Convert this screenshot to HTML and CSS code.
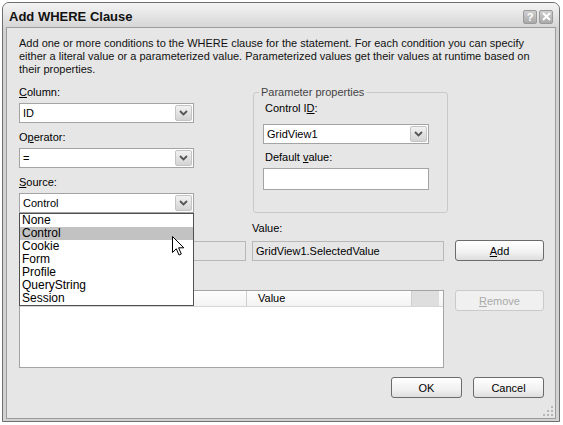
FILE: index.html
```html
<!DOCTYPE html>
<html lang="en">
<head>
  <meta charset="UTF-8">
  <title>Add WHERE Clause</title>
  <link rel="stylesheet" href="styles.css">
</head>
<body>
  <div class="window">
    <div class="titlebar">
      <span class="title">Add WHERE Clause</span>
      <div class="caption-buttons">
        <span class="cap-btn">?</span>
        <span class="cap-btn">
          <svg width="9" height="9" viewBox="0 0 9 9"><path d="M1 1 L8 8 M8 1 L1 8" stroke="#fff" stroke-width="2"/></svg>
        </span>
      </div>
    </div>

    <div class="client">
      <p class="intro">Add one or more conditions to the WHERE clause for the statement. For each condition you can specify either a literal value or a parameterized value. Parameterized values get their values at runtime based on their properties.</p>

      <div class="top-row">
        <div class="fields">
          <div class="field">
            <label><u>C</u>olumn:</label>
            <div class="combo">
              <span class="combo-text">ID</span>
              <span class="combo-btn"><svg width="9" height="6" viewBox="0 0 9 6"><path d="M1 1 L4.5 4.5 L8 1" fill="none" stroke="#555" stroke-width="1.8"/></svg></span>
            </div>
          </div>
          <div class="field">
            <label>O<u>p</u>erator:</label>
            <div class="combo">
              <span class="combo-text">=</span>
              <span class="combo-btn"><svg width="9" height="6" viewBox="0 0 9 6"><path d="M1 1 L4.5 4.5 L8 1" fill="none" stroke="#555" stroke-width="1.8"/></svg></span>
            </div>
          </div>
          <div class="field">
            <label><u>S</u>ource:</label>
            <div class="combo">
              <span class="combo-text">Control</span>
              <span class="combo-btn"><svg width="9" height="6" viewBox="0 0 9 6"><path d="M1 1 L4.5 4.5 L8 1" fill="none" stroke="#555" stroke-width="1.8"/></svg></span>
              <ul class="droplist">
                <li>None</li>
                <li class="hover">Control</li>
                <li>Cookie</li>
                <li>Form</li>
                <li>Profile</li>
                <li>QueryString</li>
                <li>Session</li>
              </ul>
              <svg class="cursor" width="13" height="21" viewBox="0 0 13 21"><path d="M0.5 0.5 L0.5 16.5 L4.3 12.8 L7 19 L9.3 18 L6.6 11.8 L11.8 11.8 Z" fill="#fff" stroke="#000" stroke-width="1"/></svg>
            </div>
          </div>
        </div>

        <fieldset class="params">
          <legend>Parameter properties</legend>
          <label>Control I<u>D</u>:</label>
          <div class="combo">
            <span class="combo-text">GridView1</span>
            <span class="combo-btn"><svg width="9" height="6" viewBox="0 0 9 6"><path d="M1 1 L4.5 4.5 L8 1" fill="none" stroke="#555" stroke-width="1.8"/></svg></span>
          </div>
          <label class="second">Default <u>v</u>alue:</label>
          <div class="textbox tall"></div>
        </fieldset>
      </div>

      <div class="mid-row">
        <div class="field expr">
          <label class="blank"></label>
          <div class="textbox readonly"></div>
        </div>
        <div class="field value">
          <label>Value:</label>
          <div class="textbox readonly">GridView1.SelectedValue</div>
        </div>
        <button class="btn"><u>A</u>dd</button>
      </div>

      <label class="list-label blank"></label>
      <div class="list-row">
        <div class="listview">
          <div class="lv-header">
            <span class="lv-col first"></span>
            <span class="lv-col second">Value</span>
            <span class="lv-fill"></span>
          </div>
        </div>
        <button class="btn" disabled><u>R</u>emove</button>
      </div>

      <div class="footer">
        <button class="btn small">OK</button>
        <button class="btn small">Cancel</button>
      </div>

      <svg class="grip" width="11" height="11" viewBox="0 0 11 11">
        <rect x="8" y="0" width="2" height="2" fill="#b5b5b5"/>
        <rect x="4" y="4" width="2" height="2" fill="#b5b5b5"/>
        <rect x="8" y="4" width="2" height="2" fill="#b5b5b5"/>
        <rect x="0" y="8" width="2" height="2" fill="#b5b5b5"/>
        <rect x="4" y="8" width="2" height="2" fill="#b5b5b5"/>
        <rect x="8" y="8" width="2" height="2" fill="#b5b5b5"/>
      </svg>
    </div>
  </div>
</body>
</html>
```

FILE: styles.css
```css
* {
  box-sizing: border-box;
}

body {
  margin: 0;
  background: #fff;
  font-family: 'Liberation Sans', Arial, sans-serif;
  font-size: 11px;
  color: #000;
}

.window {
  margin: 2px 0 0 2px;
  width: 558px;
  height: 420px;
  border: 1px solid #6e6e6e;
  border-radius: 7px 7px 0 0;
  background: #d2d2d2;
  padding: 0 3px 2px 3px;
  display: flex;
  flex-direction: column;
}

.titlebar {
  height: 24px;
  display: flex;
  align-items: center;
  justify-content: space-between;
  padding: 0 6px 0 6px;
  margin: 0 -3px;
  border-radius: 6px 6px 0 0;
  background: linear-gradient(#f4f4f4, #e2e2e2 60%, #d6d6d6);
}

.title {
  font-weight: bold;
  font-size: 13px;
  color: #111;
  padding-top: 2px;
}

.caption-buttons {
  display: flex;
  gap: 2px;
  padding-top: 3px;
}

.cap-btn {
  width: 14px;
  height: 14px;
  border: 1px solid #9a9a9a;
  border-radius: 2px;
  background: linear-gradient(#cfcfcf, #a9a9a9);
  color: #fff;
  font-weight: bold;
  font-size: 11px;
  line-height: 12px;
  text-align: center;
  display: flex;
  align-items: center;
  justify-content: center;
}

.client {
  flex: 1;
  position: relative;
  background: #e6e6e6;
  border: 1px solid #9c9c9c;
  padding: 9px 11px 0 12px;
}

.intro {
  margin: 0 0 10px 0;
  line-height: 13px;
  padding-right: 13px;
  color: #111;
}

label {
  display: block;
  line-height: 13px;
  height: 13px;
  margin-bottom: 4px;
}

.top-row {
  display: flex;
  gap: 59px;
  height: 127px;
}

.fields {
  width: 175px;
}

.field {
  margin-bottom: 8px;
}

.fields .field:last-child {
  margin-bottom: 0;
}

.combo {
  position: relative;
  height: 20px;
  background: #fff;
  border: 1px solid #a4a4a4;
  display: flex;
  align-items: center;
  justify-content: space-between;
  padding: 1px 1px 1px 3px;
}

.combo-btn {
  width: 17px;
  height: 16px;
  border: 1px solid #c4c4c4;
  border-radius: 2px;
  background: linear-gradient(#f2f2f2, #d3d3d3);
  display: flex;
  align-items: center;
  justify-content: center;
}

.droplist {
  position: absolute;
  top: 19px;
  left: -1px;
  width: 175px;
  margin: 0;
  padding: 0;
  list-style: none;
  background: #fff;
  border: 1px solid #505050;
  font-size: 12px;
  z-index: 2;
}

.droplist li {
  height: 13px;
  line-height: 13px;
  padding-left: 2px;
}

.droplist li.hover {
  background: #c2c2c2;
}

.cursor {
  position: absolute;
  top: 42px;
  left: 152px;
  z-index: 3;
}

.params {
  width: 195px;
  height: 127px;
  margin: 0;
  padding: 0 18px 0 9px;
  border: 1px solid #c9c9c9;
  border-radius: 3px;
}

.params legend {
  padding: 0 2px;
  margin-left: -4px;
  line-height: 13px;
  color: #444;
}

.params label {
  margin-top: 3px;
  margin-bottom: 9px;
  padding-left: 2px;
}

.params label.second {
  margin-top: 7px;
  margin-bottom: 4px;
}

.textbox {
  height: 20px;
  background: #fff;
  border: 1px solid #a4a4a4;
  line-height: 18px;
  padding-left: 3px;
  white-space: nowrap;
  overflow: hidden;
}

.textbox.tall {
  height: 22px;
}

.textbox.readonly {
  background: #e6e6e6;
  border-color: #b8b8b8;
}

.mid-row {
  display: flex;
  align-items: flex-end;
  margin-top: 9px;
}

.mid-row .field {
  margin-bottom: 0;
}

.mid-row label {
  margin-bottom: 6px;
}

.expr {
  width: 227px;
}

.value {
  width: 192px;
  margin-left: 6px;
}

.btn {
  font-family: 'Liberation Sans', Arial, sans-serif;
  font-size: 11px;
  color: #000;
  width: 89px;
  height: 21px;
  padding: 0;
  border: 1px solid #6b6b6b;
  border-radius: 3px;
  background: linear-gradient(#ffffff, #f1f1f1 60%, #dedede);
}

.btn:disabled {
  color: #aaa;
  border-color: #cacaca;
  background: #f0f0f0;
}

.mid-row .btn {
  margin-left: 11px;
}

.list-label {
  margin-top: 9px;
  margin-bottom: 7px;
}

.list-row {
  display: flex;
  align-items: flex-start;
  gap: 11px;
}

.listview {
  width: 425px;
  height: 78px;
  background: #fff;
  border: 1px solid #a4a4a4;
}

.lv-header {
  display: flex;
  height: 16px;
  line-height: 15px;
  border-bottom: 1px solid #d6d6d6;
  background: linear-gradient(#fdfdfd, #f3f3f3);
}

.lv-col {
  padding-left: 3px;
}

.lv-col.first {
  width: 226px;
}

.lv-col.second {
  width: 165px;
  padding-left: 11px;
  border-left: 1px solid #cfcfcf;
}

.lv-fill {
  flex: 1;
  border-left: 1px solid #cfcfcf;
  background: #dedede;
  margin-right: 4px;
}

.footer {
  display: flex;
  justify-content: flex-end;
  gap: 11px;
  margin-top: 9px;
}

.btn.small {
  width: 71px;
}

.grip {
  position: absolute;
  right: 1px;
  bottom: 1px;
}
```
